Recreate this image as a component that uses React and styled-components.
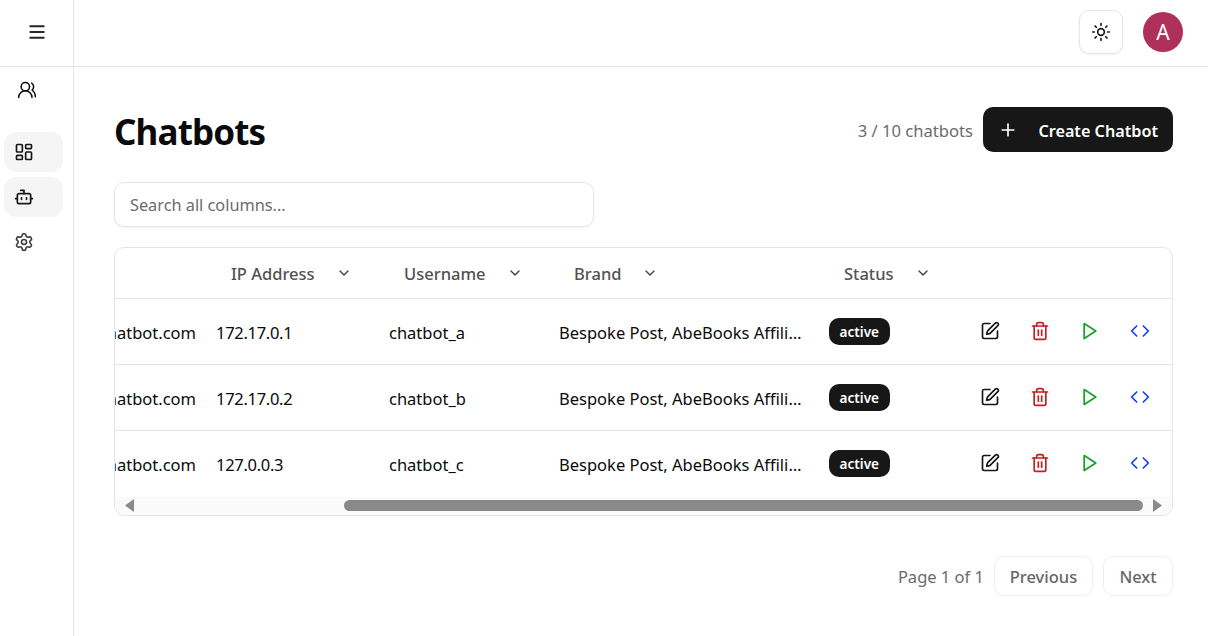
import styled, { createGlobalStyle } from "styled-components";
import {
  Bot,
  ChevronDown,
  Code,
  LayoutDashboard,
  Menu,
  Plus,
  Settings,
  SquarePen,
  Sun,
  Trash2,
  UsersRound,
} from "lucide-react";

const GlobalStyle = createGlobalStyle`
  * { box-sizing: border-box; }
  html, body { margin: 0; height: 100%; background: #fff; overflow: hidden; }
  body { font-family: "Noto Sans", "Open Sans", sans-serif; color: #0a0a0a; }
`;

const Shell = styled.div`
  display: flex;
  height: 636px;
`;

const Sidebar = styled.aside`
  width: 74px;
  flex-shrink: 0;
  border-right: 1px solid #e5e5e5;
  display: flex;
  flex-direction: column;
`;

const SidebarTop = styled.div`
  height: 67px;
  border-bottom: 1px solid #e5e5e5;
  padding-bottom: 3px;
  display: flex;
  align-items: center;
  justify-content: center;
  color: #262626;
`;

const SideNav = styled.nav`
  display: flex;
  flex-direction: column;
  padding: 0 10px 0 4px;
`;

const TeamIcon = styled.div`
  height: 46px;
  margin-bottom: 19px;
  padding-left: 13px;
  display: flex;
  align-items: center;
`;

const NavItem = styled.a`
  height: 40px;
  margin-bottom: 5px;
  padding-left: 10px;
  border-radius: 12px;
  display: flex;
  align-items: center;
  color: ${(p) => (p.$muted ? "#404040" : "#171717")};
  background: ${(p) => (p.$active ? "#f5f5f5" : "transparent")};
`;

const Main = styled.div`
  flex: 1;
  min-width: 0;
  display: flex;
  flex-direction: column;
`;

const TopBar = styled.header`
  height: 67px;
  border-bottom: 1px solid #e5e5e5;
  padding: 0 25px 3px 0;
  display: flex;
  align-items: center;
  justify-content: flex-end;
  gap: 20px;
`;

const ThemeButton = styled.button`
  width: 44px;
  height: 44px;
  border: 1px solid #e5e5e5;
  border-radius: 10px;
  background: #fff;
  box-shadow: 0 1px 2px rgba(0, 0, 0, 0.05);
  display: flex;
  align-items: center;
  justify-content: center;
  color: #171717;
`;

const Avatar = styled.div`
  width: 40px;
  height: 40px;
  border-radius: 50%;
  background: #b0305c;
  color: #fff;
  font-size: 21px;
  display: flex;
  align-items: center;
  justify-content: center;
`;

const Content = styled.main`
  padding: 40px 35px 0 40px;
  display: flex;
  flex-direction: column;
`;

const TitleRow = styled.div`
  display: flex;
  align-items: center;
  justify-content: space-between;
  height: 45px;
`;

const Title = styled.h1`
  margin: 0;
  padding-top: 4px;
  font-size: 35px;
  font-weight: 700;
  letter-spacing: -0.85px;
  color: #0a0a0a;
`;

const TitleActions = styled.div`
  display: flex;
  align-items: center;
  gap: 10px;
`;

const Count = styled.span`
  padding-top: 2px;
  font-size: 16.6px;
  color: #6b6b6b;
`;

const CreateButton = styled.button`
  width: 190px;
  height: 45px;
  border: 0;
  border-radius: 10px;
  background: #171717;
  color: #fff;
  font: 600 16.2px "Noto Sans", sans-serif;
  padding: 0 15px;
  display: flex;
  align-items: center;
  justify-content: space-between;
`;

const CreateLabel = styled.span`
  padding-top: 2px;
`;

const SearchInput = styled.input`
  width: 480px;
  height: 45px;
  margin: 30px 0 20px;
  padding: 1px 15px 0;
  border: 1px solid #e5e5e5;
  border-radius: 10px;
  box-shadow: 0 1px 2px rgba(0, 0, 0, 0.05);
  font: 16.3px "Noto Sans", sans-serif;
  outline: none;
  &::placeholder {
    color: #6b6b6b;
    opacity: 1;
  }
`;

const TableCard = styled.div`
  border: 1px solid #e5e5e5;
  border-radius: 10px;
  overflow: hidden;
`;

const Row = styled.div`
  display: grid;
  grid-template-columns: 85px 173px 170px 270px 150px 209px;
  align-items: center;
  height: ${(p) => (p.$head ? "51px" : "66px")};
  border-bottom: 1px solid ${(p) => (p.$last ? "transparent" : "#e5e5e5")};
`;

const HeadCell = styled.div`
  padding-left: 31px;
  display: flex;
  align-items: center;
  font-size: 16.5px;
  font-weight: 500;
  color: #525252;
  & > svg {
    margin-left: 21px;
    color: #404040;
  }
`;

const EmailCell = styled.div`
  padding: 1px 4px 0 0;
  display: flex;
  justify-content: flex-end;
  overflow: hidden;
  white-space: nowrap;
  font-size: 16.5px;
`;

const Cell = styled.div`
  padding: 1px 8px 0 16px;
  font-size: 16.5px;
  letter-spacing: ${(p) => (p.$numeric ? "-0.3px" : "0")};
  white-space: nowrap;
  overflow: hidden;
  text-overflow: ellipsis;
  color: #0a0a0a;
`;

const BadgeCell = styled.div`
  padding: 0 0 1px 16px;
  display: flex;
`;

const Badge = styled.span`
  display: inline-flex;
  align-items: center;
  height: 27px;
  padding: 0 10.5px;
  border-radius: 10px;
  background: #171717;
  color: #fff;
  font-size: 13.6px;
  font-weight: 600;
`;

const Actions = styled.div`
  display: flex;
  padding: 0 0 2px 17px;
  gap: 30px;
`;

const ActionIcon = styled.span`
  display: flex;
  color: ${(p) => p.$color};
`;

const ScrollBar = styled.div`
  height: 18px;
  background: #fafafa;
  display: flex;
  align-items: center;
  padding: 0 10px 1px;
`;

const Arrow = styled.span`
  width: 9px;
  height: 13px;
  background: #8a8a8a;
  clip-path: ${(p) =>
    p.$right ? "polygon(0 0, 100% 50%, 0 100%)" : "polygon(100% 0, 0 50%, 100% 100%)"};
`;

const Track = styled.div`
  flex: 1;
  padding: 0 10px 0 210px;
`;

const Thumb = styled.div`
  height: 11px;
  border-radius: 6px;
  background: #8a8a8a;
`;

const Pagination = styled.div`
  margin-top: 40px;
  display: flex;
  align-items: center;
  justify-content: flex-end;
  gap: 10px;
`;

const PageInfo = styled.span`
  font-size: 16.5px;
  color: #6b6b6b;
`;

const PageButton = styled.button`
  width: ${(p) => p.$width}px;
  height: 40px;
  padding: 0;
  border: 1px solid #eeeeee;
  border-radius: 10px;
  background: #fff;
  color: #666;
  font: 500 16.5px "Noto Sans", sans-serif;
`;

const PlayIcon = () => (
  <svg
    width="20"
    height="20"
    viewBox="0 0 24 24"
    fill="none"
    stroke="currentColor"
    strokeWidth="2"
    strokeLinejoin="round"
  >
    <polygon points="5 3 19 12 5 21 5 3" />
  </svg>
);

const columns = ["IP Address", "Username", "Brand", "Status"];

const chatbots = [
  { ip: "172.17.0.1", user: "chatbot_a" },
  { ip: "172.17.0.2", user: "chatbot_b" },
  { ip: "127.0.0.3", user: "chatbot_c" },
];

export default function App() {
  return (
    <Shell>
      <GlobalStyle />
      <Sidebar>
        <SidebarTop>
          <Menu size={20} strokeWidth={2.4} />
        </SidebarTop>
        <SideNav>
          <TeamIcon>
            <UsersRound size={20} strokeWidth={1.8} />
          </TeamIcon>
          <NavItem $active>
            <LayoutDashboard size={20} />
          </NavItem>
          <NavItem $active>
            <Bot size={20} />
          </NavItem>
          <NavItem $muted>
            <Settings size={20} />
          </NavItem>
        </SideNav>
      </Sidebar>
      <Main>
        <TopBar>
          <ThemeButton>
            <Sun size={20} />
          </ThemeButton>
          <Avatar>A</Avatar>
        </TopBar>
        <Content>
          <TitleRow>
            <Title>Chatbots</Title>
            <TitleActions>
              <Count>3 / 10 chatbots</Count>
              <CreateButton>
                <Plus size={20} />
                <CreateLabel>Create Chatbot</CreateLabel>
              </CreateButton>
            </TitleActions>
          </TitleRow>
          <SearchInput placeholder="Search all columns..." />
          <TableCard>
            <Row $head>
              <div />
              {columns.map((c) => (
                <HeadCell key={c}>
                  {c}
                  <ChevronDown size={16} />
                </HeadCell>
              ))}
              <div />
            </Row>
            {chatbots.map((b, i) => (
              <Row key={b.user} $last={i === chatbots.length - 1}>
                <EmailCell>
                  <span>info@chatbot.com</span>
                </EmailCell>
                <Cell $numeric>{b.ip}</Cell>
                <Cell>{b.user}</Cell>
                <Cell>Bespoke Post, AbeBooks Affiliate Program</Cell>
                <BadgeCell>
                  <Badge>active</Badge>
                </BadgeCell>
                <Actions>
                  <ActionIcon $color="#171717">
                    <SquarePen size={20} />
                  </ActionIcon>
                  <ActionIcon $color="#c81e1e">
                    <Trash2 size={20} />
                  </ActionIcon>
                  <ActionIcon $color="#16a02a">
                    <PlayIcon />
                  </ActionIcon>
                  <ActionIcon $color="#0a43f5">
                    <Code size={20} />
                  </ActionIcon>
                </Actions>
              </Row>
            ))}
            <ScrollBar>
              <Arrow />
              <Track>
                <Thumb />
              </Track>
              <Arrow $right />
            </ScrollBar>
          </TableCard>
          <Pagination>
            <PageInfo>Page 1 of 1</PageInfo>
            <PageButton $width={99}>Previous</PageButton>
            <PageButton $width={70}>Next</PageButton>
          </Pagination>
        </Content>
      </Main>
    </Shell>
  );
}
